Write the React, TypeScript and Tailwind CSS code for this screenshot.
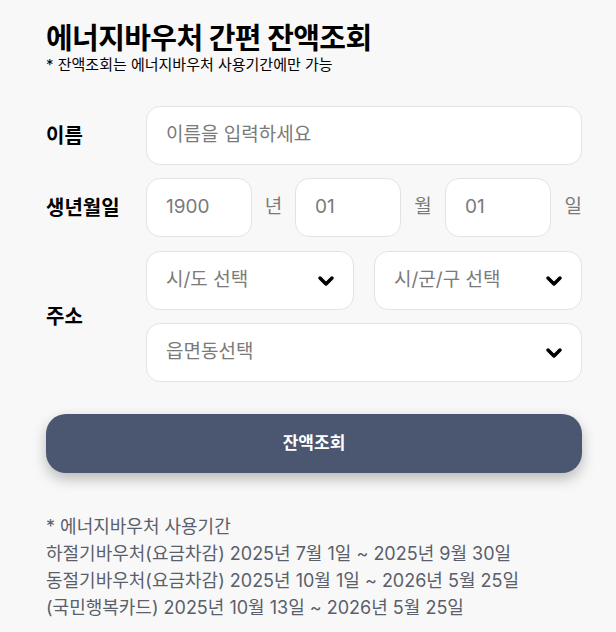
import { ChevronDown } from 'lucide-react'

const font = { fontFamily: 'Inter, "Noto Sans CJK KR", sans-serif' }

const box =
  'h-[59px] bg-white border border-[#e3e3e3] rounded-[14px] flex items-center px-[19px] text-[19px] text-[#7a7a7a]'

function Select({ label, className = '' }: { label: string; className?: string }) {
  return (
    <div className={`${box} justify-between ${className}`}>
      <span>{label}</span>
      <ChevronDown className="w-[24px] h-[24px] text-black -mr-[4px]" strokeWidth={3.5} />
    </div>
  )
}

export default function App() {
  return (
    <div className="min-h-[632px] bg-[#f8f8f8] pl-[46px] pr-[34px] pt-[22px] font-['Inter','Noto_Sans_CJK_KR',sans-serif]">
      <h1 className="text-[29px] font-bold text-black leading-[34px] tracking-[-0.6px]">
        에너지바우처 간편 잔액조회
      </h1>
      <p className="text-[15px] text-black leading-[18px]">
        * 잔액조회는 에너지바우처 사용기간에만 가능
      </p>

      <div className="mt-[32px] flex flex-col gap-[13px]">
        <div className="flex items-center">
          <div className="w-[100px] text-[20px] font-bold text-black">이름</div>
          <div className={`${box} flex-1`}>이름을 입력하세요</div>
        </div>

        <div className="flex items-center">
          <div className="w-[100px] text-[20px] font-bold text-black">생년월일</div>
          <div className={`${box} w-[106px]`}>1900</div>
          <span className="w-[43px] text-center text-[19px] text-[#7a7a7a]">년</span>
          <div className={`${box} w-[106px]`}>01</div>
          <span className="w-[44px] text-center text-[19px] text-[#7a7a7a]">월</span>
          <div className={`${box} w-[106px]`}>01</div>
          <span className="flex-1 text-right text-[19px] text-[#7a7a7a]">일</span>
        </div>

        <div className="flex items-center mt-[1px]">
          <div className="w-[100px] text-[20px] font-bold text-black">주소</div>
          <div className="flex-1 flex flex-col gap-[13px]">
            <div className="flex gap-[20px]">
              <Select label="시/도 선택" className="flex-1" />
              <Select label="시/군/구 선택" className="flex-1" />
            </div>
            <Select label="읍면동선택" />
          </div>
        </div>
      </div>

      <button
        className="mt-[32px] w-full h-[59px] rounded-[20px] bg-[#4b5671] text-white text-[17px] font-bold shadow-[0_6px_14px_rgba(0,0,0,0.25)]"
        style={font}
      >
        잔액조회
      </button>

      <div className="mt-[40px] text-[18px] leading-[27px] text-[#5a5f6b]">
        <p>* 에너지바우처 사용기간</p>
        <p>하절기바우처(요금차감) 2025년 7월 1일 ~ 2025년 9월 30일</p>
        <p>동절기바우처(요금차감) 2025년 10월 1일 ~ 2026년 5월 25일</p>
        <p>(국민행복카드) 2025년 10월 13일 ~ 2026년 5월 25일</p>
      </div>
    </div>
  )
}
